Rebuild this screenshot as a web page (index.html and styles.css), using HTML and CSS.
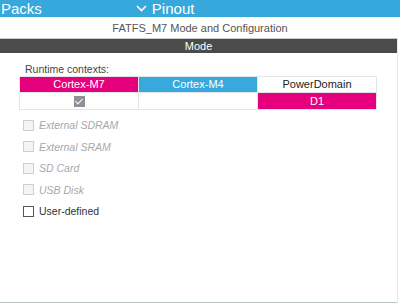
FILE: index.html
```html
<!DOCTYPE html>
<html lang="en">
<head>
    <meta charset="UTF-8">
    <title>FATFS_M7 Mode and Configuration</title>
    <link rel="stylesheet" href="styles.css">
</head>
<body>
    <div class="topbar">
        <span class="tab">Packs</span>
        <span class="tab pinout">
            <svg class="chevron" width="11" height="7" viewBox="0 0 11 7"><polyline points="1,1 5.5,5.5 10,1" fill="none" stroke="#fff" stroke-width="1.6"/></svg>
            Pinout
        </span>
    </div>

    <div class="title">FATFS_M7 Mode and Configuration</div>

    <div class="panel">
        <div class="mode-bar">Mode</div>

        <div class="content">
            <div class="label">Runtime contexts:</div>
            <table class="contexts">
                <tr>
                    <th class="m7">Cortex-M7</th>
                    <th class="m4">Cortex-M4</th>
                    <th class="pd">PowerDomain</th>
                </tr>
                <tr>
                    <td><span class="box checked"></span></td>
                    <td></td>
                    <td class="d1">D1</td>
                </tr>
            </table>

            <ul class="options">
                <li class="disabled"><span class="box"></span>External SDRAM</li>
                <li class="disabled"><span class="box"></span>External SRAM</li>
                <li class="disabled"><span class="box"></span>SD Card</li>
                <li class="disabled"><span class="box"></span>USB Disk</li>
                <li><span class="box"></span>User-defined</li>
            </ul>
        </div>
    </div>
</body>
</html>
```

FILE: styles.css
```css
body {
    margin: 0;
    width: 400px;
    height: 303px;
    overflow: hidden;
    font-family: "Liberation Sans", Arial, sans-serif;
    background-color: #fff;
}
.topbar {
    height: 17px;
    background-color: #36a8db;
    color: #fff;
    font-size: 15px;
    line-height: 17px;
    display: flex;
}
.tab {
    padding-left: 1px;
}
.pinout {
    margin-left: 93px;
    display: flex;
    align-items: center;
}
.chevron {
    margin-right: 5px;
}
.title {
    height: 21px;
    line-height: 22px;
    text-align: center;
    font-size: 11px;
    color: #555;
}
.panel {
    width: 397px;
    height: 264px;
    border-right: 1px solid #e4e8ea;
    border-bottom: 2px solid #b9c4c8;
}
.mode-bar {
    height: 14px;
    border-top: 1px solid #c9c9c9;
    background-color: #4b4b4b;
    color: #fff;
    font-size: 11px;
    line-height: 14px;
    text-align: center;
}
.content {
    padding: 10px 0 0 19px;
}
.label {
    font-size: 10.5px;
    color: #444;
    padding-left: 6px;
    height: 13px;
    line-height: 12px;
}
.contexts {
    border-collapse: collapse;
    font-size: 11px;
}
.contexts th,
.contexts td {
    border: 1px solid #e2e6e8;
    height: 15px;
    padding: 0;
    text-align: center;
    font-weight: normal;
    line-height: 15px;
}
.contexts td {
    height: 16px;
}
.m7,
.m4,
.pd {
    width: 118px;
}
.m7 {
    background-color: #e6007e;
    color: #fff;
}
.m4 {
    background-color: #38a9dc;
    color: #fff;
}
.pd {
    color: #222;
}
.d1 {
    background-color: #e6007e;
    color: #fff;
}
.box {
    display: inline-block;
    width: 9px;
    height: 9px;
    border: 1px solid #555;
    background-color: #fff;
    vertical-align: middle;
    position: relative;
}
.box.checked {
    background-color: #8e9195;
    border-color: #8e9195;
}
.box.checked::after {
    content: "";
    position: absolute;
    left: 2px;
    top: 0;
    width: 3px;
    height: 6px;
    border: solid #fff;
    border-width: 0 1.5px 1.5px 0;
    transform: rotate(45deg);
}
.options {
    list-style: none;
    margin: 8px 0 0 4px;
    padding: 0;
    font-size: 10.5px;
}
.options li {
    height: 21.5px;
    line-height: 14px;
    color: #333;
}
.options .box {
    margin-right: 5px;
    margin-top: -2px;
}
.options .disabled {
    color: #a8a8a8;
    font-style: italic;
}
.options .disabled .box {
    border-color: #cfcfcf;
    background-color: #f4f4f4;
}
```
